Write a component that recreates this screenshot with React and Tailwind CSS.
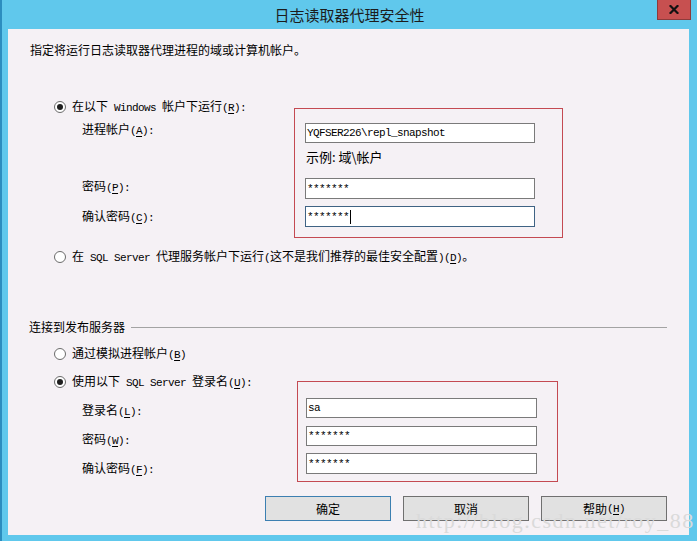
import React from 'react';
import clsx from 'clsx';

// split a label into CJK runs and half-width (SimSun-like) ascii runs; "&x" marks an underlined mnemonic
function runs(text) {
  const out = [];
  for (let i = 0; i < text.length; i++) {
    let ch = text[i];
    let type;
    if (ch === '&') {
      i++;
      ch = text[i];
      type = 'u';
    } else {
      type = /[ -~]/.test(ch) ? 'a' : 'c';
    }
    const last = out[out.length - 1];
    if (last && last.type === type && type !== 'u') last.s += ch;
    else out.push({ type, s: ch });
  }
  return out;
}

const Txt = ({ children }) =>
  runs(children).map((r, i) =>
    r.type === 'c' ? (
      <span key={i}>{r.s}</span>
    ) : (
      <span
        key={i}
        className={clsx(
          "font-['Liberation_Mono'] text-[11px] tracking-[-0.6px] whitespace-pre",
          r.type === 'u' && 'underline underline-offset-2'
        )}
      >
        {r.s}
      </span>
    )
  );

const Radio = ({ checked, children }) => (
  <div className="flex items-center h-4 leading-4">
    <span className="w-[12px] h-[12px] rounded-full border border-[#6b6b6b] bg-white flex items-center justify-center shrink-0">
      {checked && <span className="w-[6px] h-[6px] rounded-full bg-[#1f1f1f]" />}
    </span>
    <span className="ml-[6px] whitespace-nowrap">
      <Txt>{children}</Txt>
    </span>
  </div>
);

const Field = ({ value, focused, className }) => (
  <div
    className={clsx(
      'bg-white border flex items-center pl-[1px] leading-4',
      focused ? 'border-[#3f6384]' : 'border-[#7a7a7a]',
      className
    )}
  >
    <Txt>{value}</Txt>
    {focused && <span className="w-px h-[14px] bg-black ml-[1px]" />}
  </div>
);

const Button = ({ primary, children }) => (
  <button
    className={clsx(
      'w-[126px] h-[25px] bg-[#e1e1e1] border flex items-center justify-center leading-4',
      primary ? 'border-[#3c7fb1]' : 'border-[#707070]'
    )}
  >
    <Txt>{children}</Txt>
  </button>
);

export default function App() {
  return (
    <div className="w-[697px] h-[541px] relative overflow-hidden bg-[#60c8ec] border-l-2 border-[#2c8dbf] flex flex-col font-['Noto_Sans_CJK_SC',sans-serif] text-[12px] text-black">
      {/* title bar */}
      <div className="h-[29px] shrink-0 relative flex items-center justify-center">
        <span className="text-[15px] text-[#1c1c1c] leading-5">日志读取器代理安全性</span>
        <div className="absolute right-[6px] top-0 w-[34px] h-[20px] bg-[#c75050] border border-t-0 border-[#8d3b3b] flex items-center justify-center">
          <svg width="10" height="9" viewBox="0 0 10 9">
            <path d="M1.5 1 L8.5 8 M8.5 1 L1.5 8" stroke="#111" strokeWidth="2.2" strokeLinecap="square" />
          </svg>
        </div>
      </div>

      {/* client area */}
      <div className="flex-1 ml-[6px] mr-[8px] mb-[6px] bg-[#f5f1f5] flex flex-col">
        <div className="pt-[13px] pl-[22px] leading-4">指定将运行日志读取器代理进程的域或计算机帐户。</div>

        {/* windows account */}
        <div className="mt-[41px] pl-[46px] flex">
          <div className="w-[240px] flex flex-col">
            <Radio checked>在以下 Windows 帐户下运行(&R):</Radio>
            <div className="mt-[6px] pl-[28px] leading-4"><Txt>进程帐户(&A):</Txt></div>
            <div className="mt-[39px] pl-[28px] leading-4"><Txt>密码(&P):</Txt></div>
            <div className="mt-[12px] pl-[28px] leading-4"><Txt>确认密码(&C):</Txt></div>
          </div>
          <div className="mt-[9px] w-[269px] border border-[#c44a52] flex flex-col pl-[10px] pt-[14px] pb-[10px]">
            <Field value="YQFSER226\repl_snapshot" className="w-[230px] h-[20px]" />
            <div className="mt-[6px] pl-[1px] leading-4 text-[13px]">示例: 域\帐户</div>
            <Field value="*******" className="mt-[13px] w-[230px] h-[21px]" />
            <Field value="*******" focused className="mt-[7px] w-[230px] h-[21px]" />
          </div>
        </div>

        <div className="mt-[11px] pl-[46px]">
          <Radio>在 SQL Server 代理服务帐户下运行(这不是我们推荐的最佳安全配置)(&D)。</Radio>
        </div>

        {/* publisher connection */}
        <div className="mt-[54px] pl-[21px] pr-[22px] flex items-center leading-4">
          <span>连接到发布服务器</span>
          <div className="ml-[6px] flex-1 h-px bg-[#a3a3a3]" />
        </div>

        <div className="mt-[11px] pl-[46px]">
          <Radio>通过模拟进程帐户(&B)</Radio>
        </div>

        <div className="mt-[12px] pl-[46px] flex">
          <div className="w-[243px] flex flex-col">
            <Radio checked>使用以下 SQL Server 登录名(&U):</Radio>
            <div className="mt-[12px] pl-[28px] leading-4"><Txt>登录名(&L):</Txt></div>
            <div className="mt-[11px] pl-[28px] leading-4"><Txt>密码(&W):</Txt></div>
            <div className="mt-[11px] pl-[28px] leading-4"><Txt>确认密码(&F):</Txt></div>
          </div>
          <div className="mt-[7px] w-[261px] border border-[#c44a52] flex flex-col pl-[8px] pt-[16px] pb-[7px]">
            <Field value="sa" className="w-[231px] h-[20px]" />
            <Field value="*******" className="mt-[8px] w-[231px] h-[20px]" />
            <Field value="*******" className="mt-[7px] w-[231px] h-[21px]" />
          </div>
        </div>

        <div className="mt-[14px] pr-[22px] flex justify-end gap-[12px]">
          <Button primary>确定</Button>
          <Button>取消</Button>
          <Button>帮助(&H)</Button>
        </div>
      </div>

      {/* watermark */}
      <div className="absolute left-[414px] top-[510px] font-['Liberation_Serif',serif] text-[22px] leading-none tracking-[1.5px] text-[#dadada] pointer-events-none whitespace-nowrap">
        http://blog.csdn.net/roy_88
      </div>
    </div>
  );
}
